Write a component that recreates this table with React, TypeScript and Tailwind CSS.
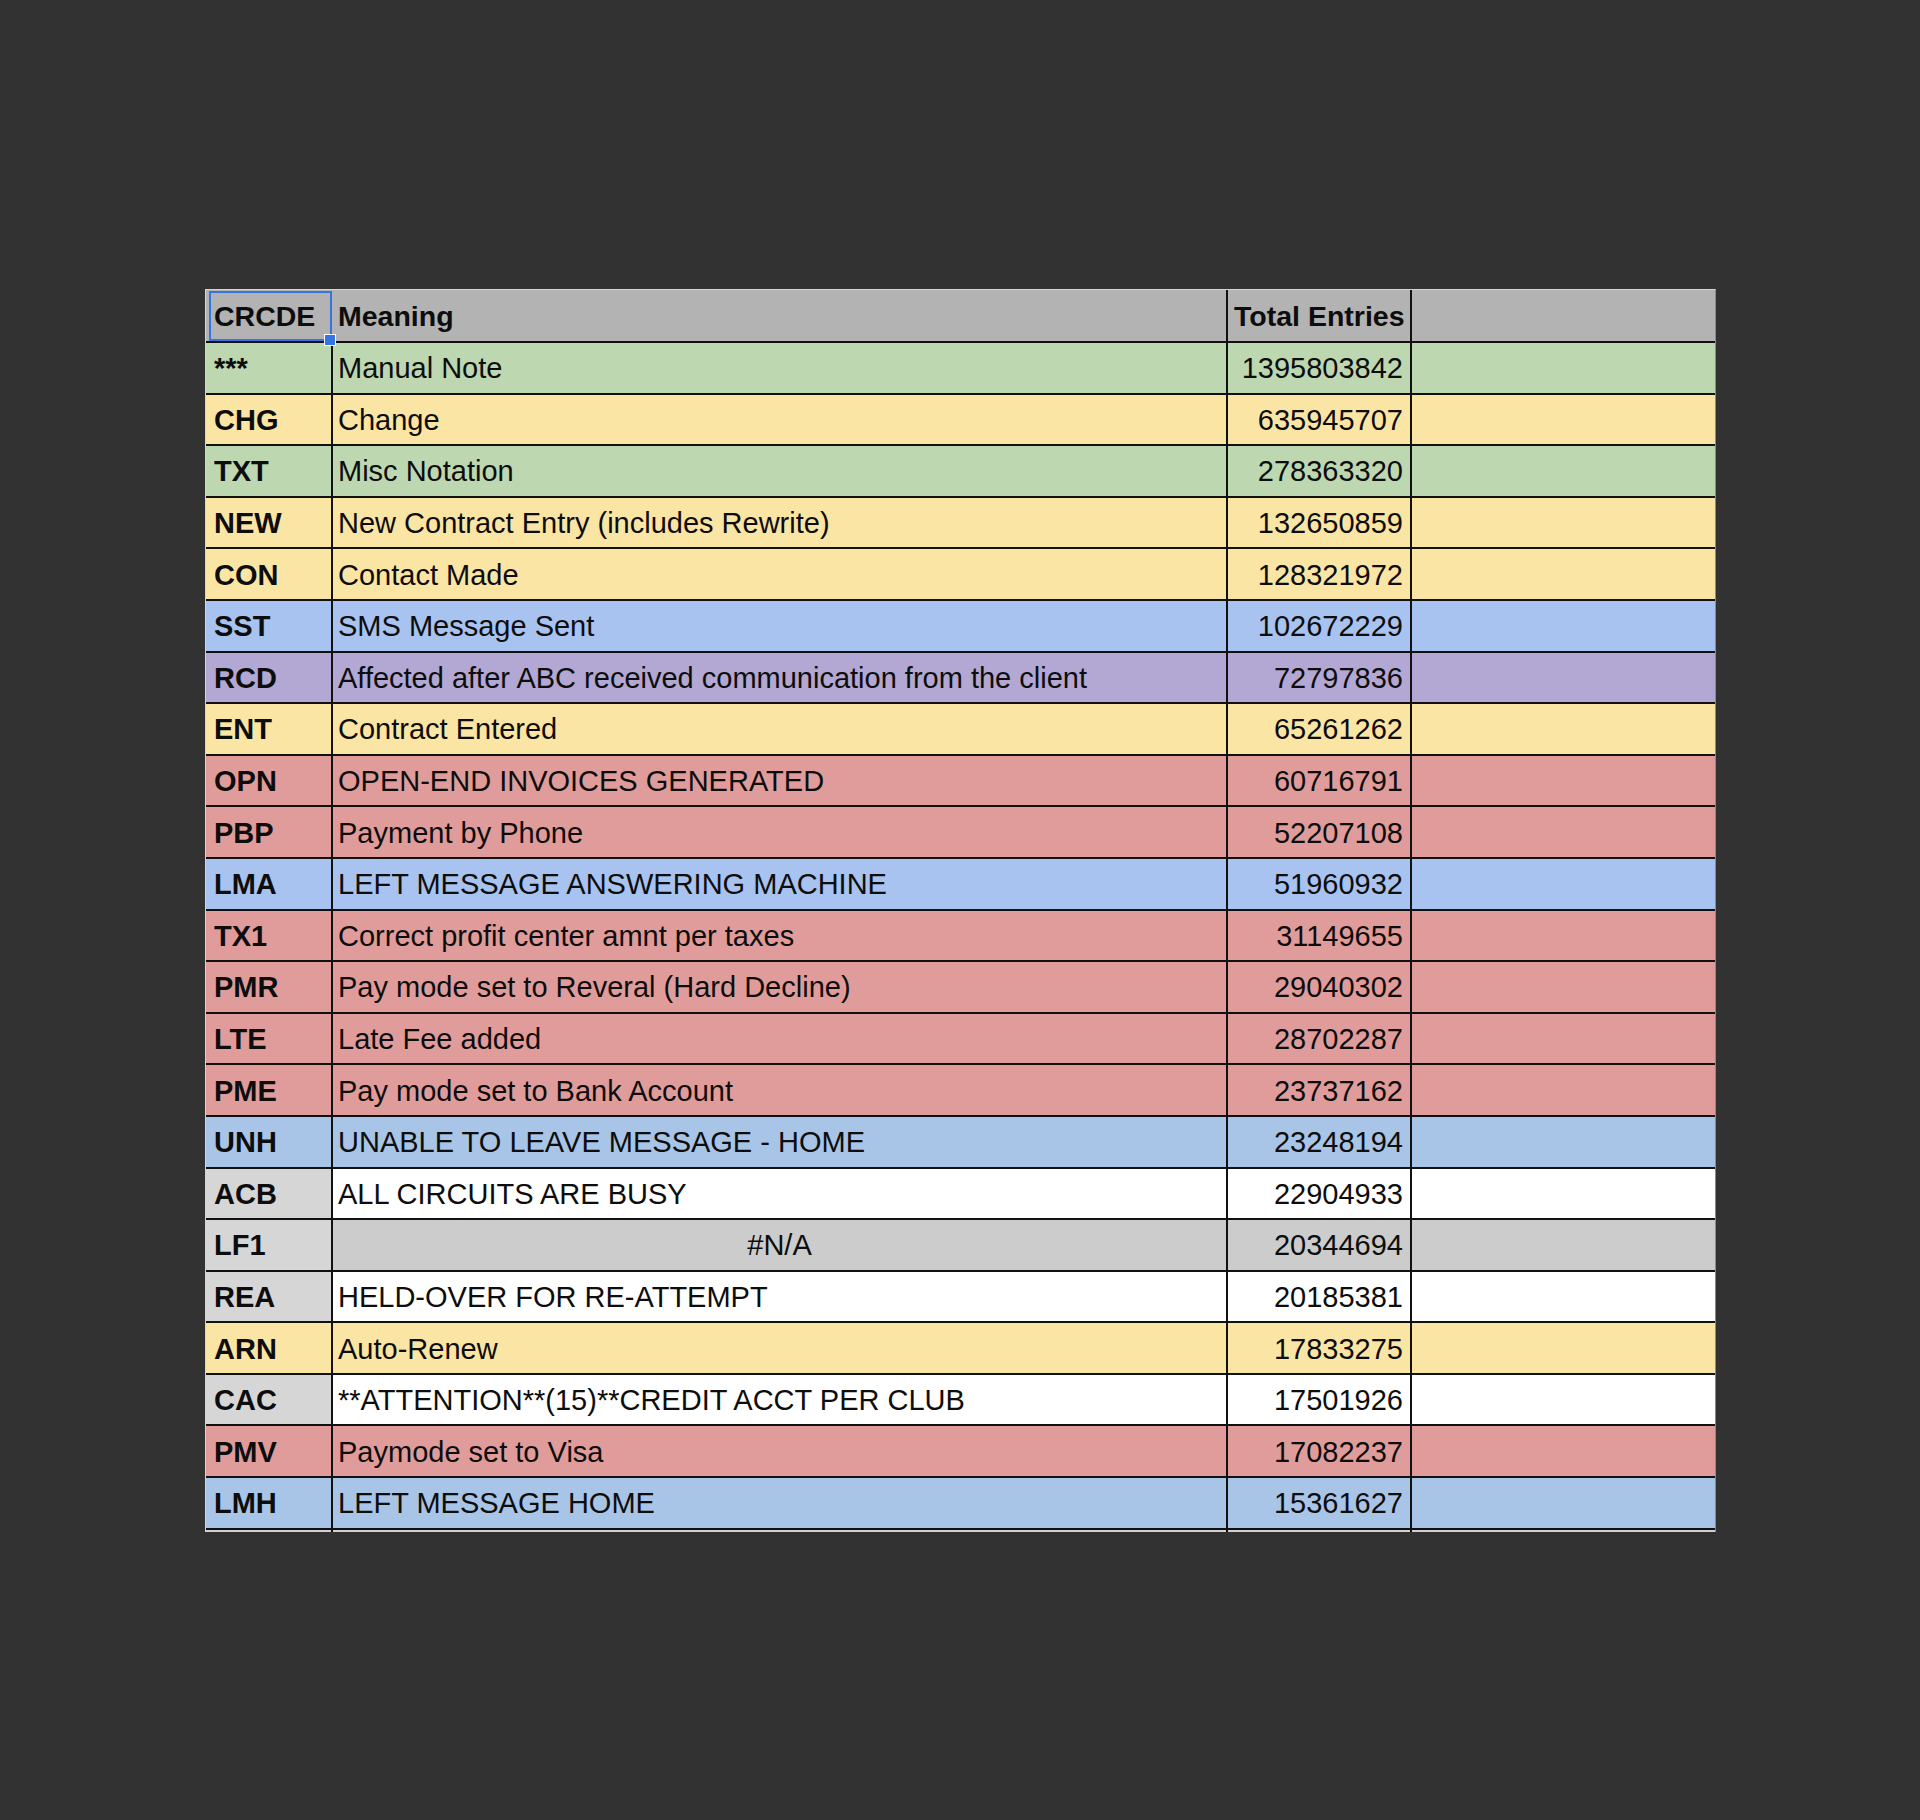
import React from "react";

type Row = { code: string; meaning: string; total: string; color: string; codeColor?: string; center?: boolean };

const G = "bg-[#bdd7b1]";
const Y = "bg-[#fbe5a4]";
const B = "bg-[#a8c3f0]";
const P = "bg-[#b2a8d3]";
const R = "bg-[#e09c9a]";
const LB = "bg-[#a8c5e7]";
const W = "bg-white";
const GR = "bg-[#cccccc]";
const CG = "bg-[#d6d6d6]";

const rows: Row[] = [
  { code: "***", meaning: "Manual Note", total: "1395803842", color: G },
  { code: "CHG", meaning: "Change", total: "635945707", color: Y },
  { code: "TXT", meaning: "Misc Notation", total: "278363320", color: G },
  { code: "NEW", meaning: "New Contract Entry (includes Rewrite)", total: "132650859", color: Y },
  { code: "CON", meaning: "Contact Made", total: "128321972", color: Y },
  { code: "SST", meaning: "SMS Message Sent", total: "102672229", color: B },
  { code: "RCD", meaning: "Affected after ABC received communication from the client", total: "72797836", color: P },
  { code: "ENT", meaning: "Contract Entered", total: "65261262", color: Y },
  { code: "OPN", meaning: "OPEN-END INVOICES GENERATED", total: "60716791", color: R },
  { code: "PBP", meaning: "Payment by Phone", total: "52207108", color: R },
  { code: "LMA", meaning: "LEFT MESSAGE ANSWERING MACHINE", total: "51960932", color: B },
  { code: "TX1", meaning: "Correct profit center amnt per taxes", total: "31149655", color: R },
  { code: "PMR", meaning: "Pay mode set to Reveral (Hard Decline)", total: "29040302", color: R },
  { code: "LTE", meaning: "Late Fee added", total: "28702287", color: R },
  { code: "PME", meaning: "Pay mode set to Bank Account", total: "23737162", color: R },
  { code: "UNH", meaning: "UNABLE TO LEAVE MESSAGE - HOME", total: "23248194", color: LB },
  { code: "ACB", meaning: "ALL CIRCUITS ARE BUSY", total: "22904933", color: W, codeColor: CG },
  { code: "LF1", meaning: "#N/A", total: "20344694", color: GR, codeColor: CG, center: true },
  { code: "REA", meaning: "HELD-OVER FOR RE-ATTEMPT", total: "20185381", color: W, codeColor: CG },
  { code: "ARN", meaning: "Auto-Renew", total: "17833275", color: Y },
  { code: "CAC", meaning: "**ATTENTION**(15)**CREDIT ACCT PER CLUB", total: "17501926", color: W, codeColor: CG },
  { code: "PMV", meaning: "Paymode set to Visa", total: "17082237", color: R },
  { code: "LMH", meaning: "LEFT MESSAGE HOME", total: "15361627", color: LB },
];

export default function App() {
  return (
    <div
      className="w-[1920px] min-h-[1820px] bg-[#323232] pt-[289px] pl-[205px] text-[#0d0d0d]"
      style={{ fontFamily: '"Liberation Sans", Arial, Helvetica, sans-serif' }}
    >
      <div className="w-[1511px] border-l border-t border-r border-l-[#d4d4d4] border-t-[#d4d4d4] border-r-[#8a8a8a] text-[29px] leading-none">
        {/* header */}
        <div className="grid grid-cols-[127px_895px_184px_303px] h-[53px] border-b-2 border-[#111111] bg-[#b3b3b3] font-bold text-[28.5px]">
          <div className="relative flex items-center pl-[8px] pt-[2px]">
            <span>CRCDE</span>
            <div className="absolute left-[3px] top-[1px] right-[1px] bottom-0 border-2 border-[#3574e3]" />
            <div className="absolute right-[-3px] bottom-[-5px] w-[12px] h-[12px] bg-[#3574e3] border border-white z-10" />
          </div>
          <div className="flex items-center pl-[5px] pt-[2px] border-r-2 border-[#111111]">Meaning</div>
          <div className="flex items-center pl-[6px] pt-[2px] border-r-2 border-[#111111]">Total Entries</div>
          <div />
        </div>
        {rows.map((r) => (
          <div
            key={r.code}
            className={`grid grid-cols-[127px_895px_184px_303px] h-[51.6px] border-b-2 border-[#111111] ${r.color}`}
          >
            <div className={`flex items-center pl-[8px] pt-[2px] font-bold border-r-2 border-[#111111] ${r.codeColor ?? ""}`}>
              {r.code}
            </div>
            <div
              className={`flex items-center pt-[2px] border-r-2 border-[#111111] whitespace-nowrap ${r.center ? "justify-center" : "pl-[5px]"}`}
            >
              {r.meaning}
            </div>
            <div className="flex items-center justify-end pr-[7px] pt-[2px] border-r-2 border-[#111111]">{r.total}</div>
            <div />
          </div>
        ))}
        <div className="grid grid-cols-[127px_895px_184px_303px] h-[2px] bg-[#cfcfcf]">
          <div className="border-r-2 border-[#111111]" />
          <div className="border-r-2 border-[#111111]" />
          <div className="border-r-2 border-[#111111]" />
          <div />
        </div>
      </div>
    </div>
  );
}
